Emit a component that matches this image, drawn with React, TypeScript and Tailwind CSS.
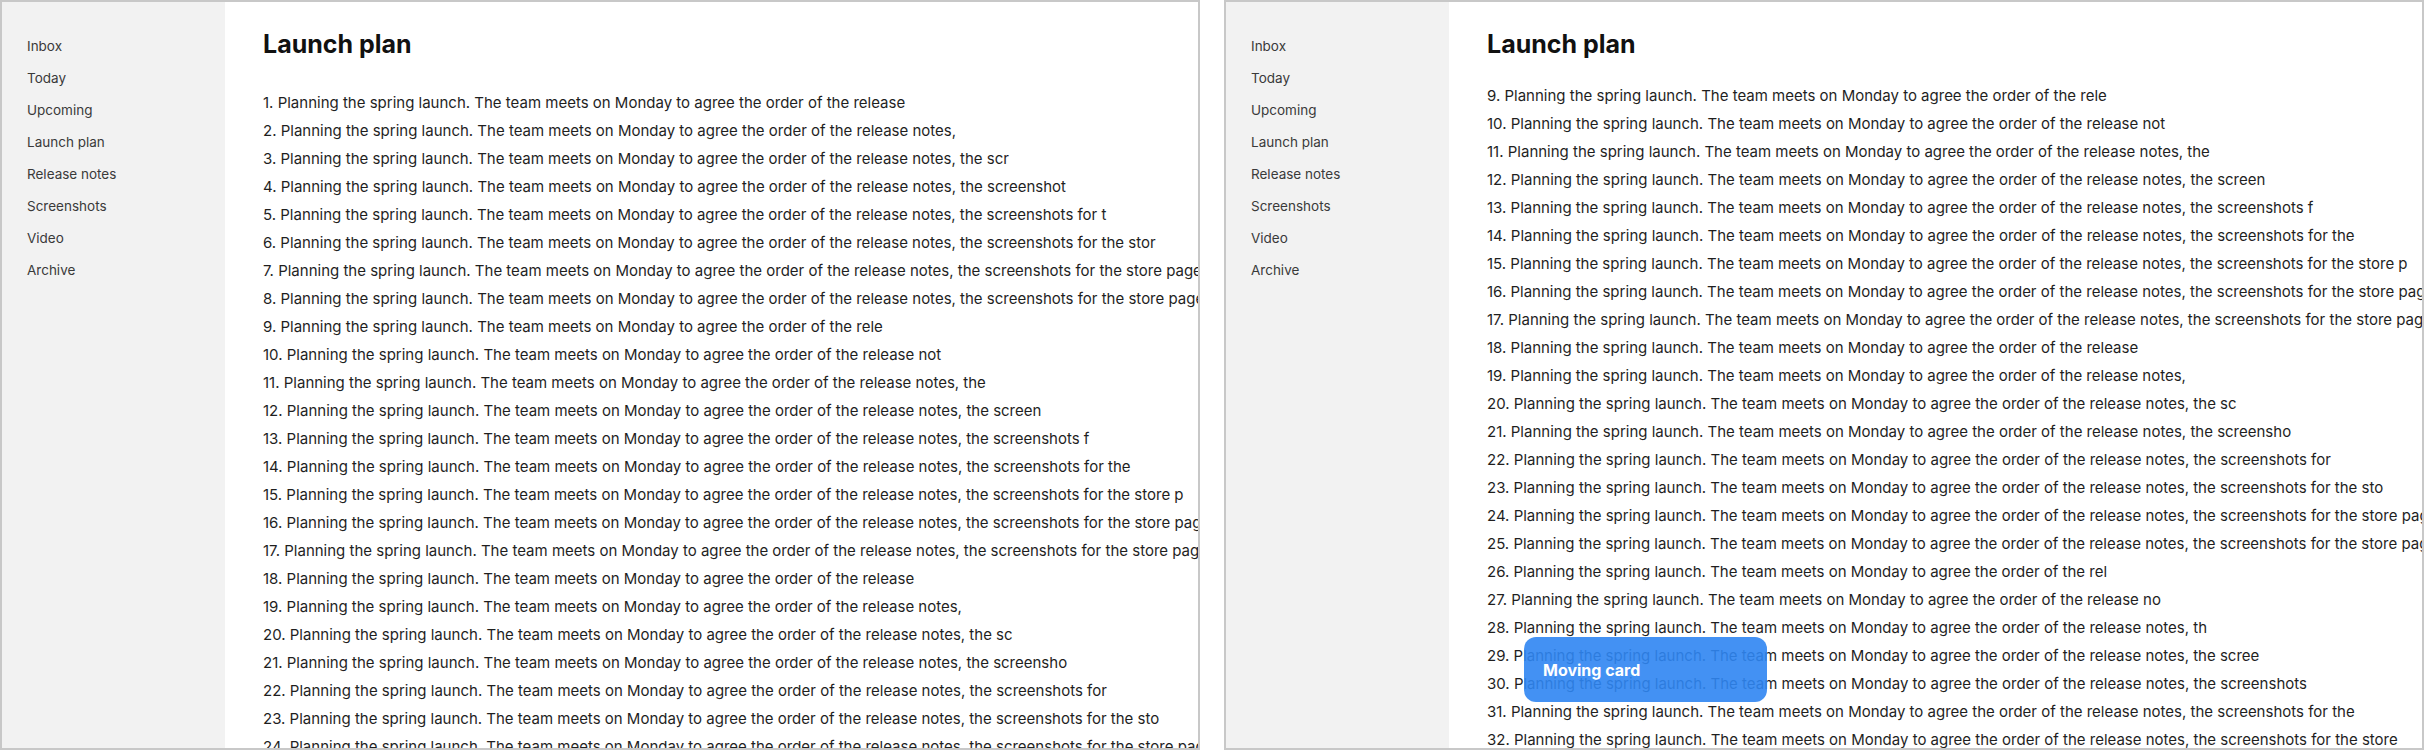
const NAV = ["Inbox", "Today", "Upcoming", "Launch plan", "Release notes", "Screenshots", "Video", "Archive"]

const BASE =
  "Planning the spring launch. The team meets on Monday to agree the order of the release notes, the screenshots for the store page and the launch video for the press kit."

const itemText = (i: number) => `${i}. ${BASE.slice(0, 80 + ((7 * i) % 60)).trimEnd()}`

interface PanelProps {
  from: number
  count: number
  listTop: string
  children?: React.ReactNode
}

function Panel({ from, count, listTop, children }: PanelProps) {
  const items = Array.from({ length: count }, (_, k) => itemText(from + k))

  return (
    <div className="relative flex w-[1200px] h-[750px] shrink-0 border-2 border-[#c8c8c8] overflow-hidden">
      <aside className="w-[223px] shrink-0 bg-[#f2f2f2] pt-[28px] pl-[25px]">
        {NAV.map((n) => (
          <div key={n} className="h-8 flex items-center text-[13.5px] text-[#3a3a3a]">
            {n}
          </div>
        ))}
      </aside>

      <main className="flex-1 min-w-0 h-full overflow-hidden">
        <div className="bg-white pl-[38px] pt-[26px] pb-[20px]">
          <h1 className="text-[25px] leading-8 font-bold text-[#111]">Launch plan</h1>
        </div>
        <div className={`${listTop} pl-[38px]`}>
          {items.map((t) => (
            <div key={t} className="whitespace-nowrap text-[15px] leading-7 text-[#1f1f1f]">
              {t}
            </div>
          ))}
        </div>
      </main>

      {children}
    </div>
  )
}

export default function App() {
  return (
    <div
      className="flex gap-6 w-[2424px] h-[750px] bg-white overflow-hidden"
      style={{ fontFamily: "Inter, 'Noto Sans', sans-serif" }}
    >
      <Panel from={1} count={24} listTop="mt-[9px]" />
      <Panel from={9} count={24} listTop="mt-[2px]">
        {/* card being dragged over the list */}
        <div className="absolute left-[298px] top-[635px] z-20 w-[243px] h-[65px] rounded-xl bg-[#2f86f2] opacity-90 flex items-center pl-[19px]">
          <span className="text-white text-[16px] font-bold">Moving card</span>
        </div>
      </Panel>
    </div>
  )
}
